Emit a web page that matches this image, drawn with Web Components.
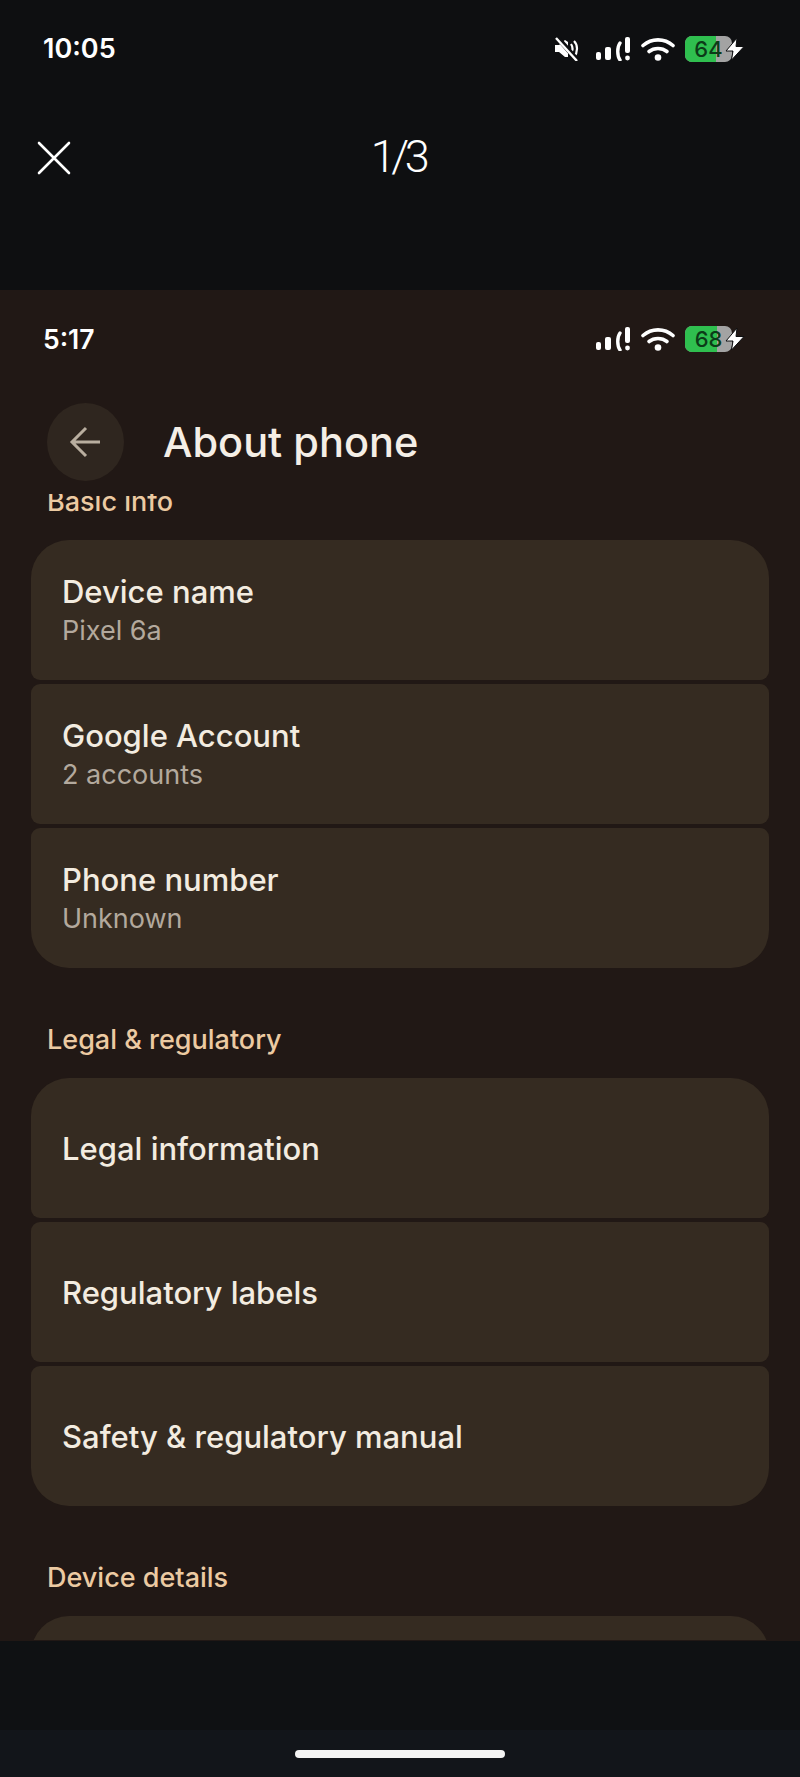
<!DOCTYPE html>
<html>
<head>
<meta charset="utf-8">
<title>About phone</title>
<style>
    html, body { margin: 0; padding: 0; background: #0e0f11; }
    body { width: 800px; height: 1777px; overflow: hidden; font-family: "Inter", "Liberation Sans", sans-serif; }
</style>
</head>
<body>
<viewer-app></viewer-app>

<script>
class StatusIcons extends HTMLElement {
    connectedCallback () {
        this.attachShadow({mode: "open"});
        let mute = "";

        if(this.hasAttribute("muted"))
            mute = `
            <svg class="mute" width="26" height="24" viewBox="0 0 26 24">
                <path fill="#fff" d="M1 8h4l6-5 3 2v15l-3 0-6-5H1z"/>
                <path fill="none" stroke="#fff" stroke-width="2.2" d="M17 7c2 3 2 6 0 9M20 4c4 4 4 11 0 16"/>
                <path stroke="#0e0f11" stroke-width="5" d="M3 0l21 24"/>
                <path stroke="#fff" stroke-width="2.4" d="M2 1l21 23"/>
            </svg>`;

        this.shadowRoot.innerHTML = `
        <style>
            :host { display: flex; align-items: center; height: 26px; }
            svg { display: block; flex: none; }
            .mute { margin-right: 16px; }
            .signal { margin-right: 10px; }
            .wifi { margin-right: 10px; }
            .battery { position: relative; width: 47px; height: 26px; border-radius: 7px; background: #a3a3a3; font: 500 22px/26px "Inter", "Liberation Sans", sans-serif; color: #0c3b18; text-align: center; }
            .battery i { position: absolute; left: 0; top: 0; bottom: 0; width: var(--level); background: #2fbf4f; border-radius: 7px 0 0 7px; }
            .battery span { position: relative; }
        </style>
        ${mute}
        <svg class="signal" width="35" height="24" viewBox="0 0 35 24">
            <rect x="0" y="15" width="5" height="8" rx="2" fill="#fff"/>
            <rect x="9" y="10" width="6" height="13" rx="2" fill="#fff"/>
            <path d="M24 6c-3 4-3 13 0 17" fill="none" stroke="#fff" stroke-width="3.4" stroke-linecap="round"/>
            <rect x="29" y="0" width="5" height="16" rx="2" fill="#fff"/>
            <circle cx="31.5" cy="21" r="2.4" fill="#fff"/>
        </svg>
        <svg class="wifi" width="34" height="24" viewBox="0 0 34 24">
            <g fill="none" stroke="#fff" stroke-width="3.6" stroke-linecap="round">
                <path d="M2 8.5C10.500 1 23.500 1 32 8.500"/>
                <path d="M8 14.500c5-4 13-4 18 0"/>
            </g>
            <circle cx="17" cy="20.500" r="3.300" fill="#fff"/>
        </svg>
        <div class="battery" style="--level: ${this.getAttribute("fill")}"><i></i><span>${this.getAttribute("level")}</span></div>
        <svg class="bolt" width="20" height="24" viewBox="0 0 20 24" style="margin-left: -7px; position: relative">
            <path fill="#fff" stroke="#0e0f11" stroke-width="1" d="M12 1L1 14h7L6.500 23 19 9.500h-8z"/>
        </svg>
        `;
    }
}

class StatusBar extends HTMLElement {
    connectedCallback () {
        this.attachShadow({mode: "open"});
        let time = this.getAttribute("time");
        let level = this.getAttribute("level");
        let fill = this.getAttribute("fill");
        let muted = this.hasAttribute("muted") ? "muted" : "";
        this.shadowRoot.innerHTML = `
        <style>
            :host { display: flex; justify-content: space-between; align-items: center; padding: 0 55px 0 43px; height: 26px; color: #fff; }
            .time { font: 600 var(--time-size, 27px)/26px "Inter", "Liberation Sans", sans-serif; }
        </style>
        <span class="time">${time}</span>
        <status-icons level="${level}" fill="${fill}" ${muted}></status-icons>
        `;
    }
}

class ViewerHeader extends HTMLElement {
    connectedCallback () {
        this.attachShadow({mode: "open"});
        this.shadowRoot.innerHTML = `
        <style>
            :host { display: grid; grid-template-columns: 1fr auto 1fr; align-items: center; height: 40px; padding: 0 37px; color: #fff; }
            svg { display: block; }
            .count { font: 300 45px/36px "Roboto", "Liberation Sans", sans-serif; letter-spacing: -4.500px; padding-right: 4px; margin-top: -3px; }
        </style>
        <svg width="34" height="34" viewBox="0 0 34 34"><path d="M2 2l30 30M32 2L2 32" stroke="#fff" stroke-width="2.600" stroke-linecap="round"/></svg>
        <span class="count"><slot></slot></span>
        <span></span>
        `;
    }
}

class SectionLabel extends HTMLElement {
    connectedCallback () {
        this.attachShadow({mode: "open"});
        this.shadowRoot.innerHTML = `
        <style>
            :host { display: block; padding: 2px 0 0 47px; font: 500 27px/32px "Inter", "Liberation Sans", sans-serif; color: #eccaa2; }
        </style>
        <slot></slot>
        `;
    }
}

class PrefGroup extends HTMLElement {
    connectedCallback () {
        this.attachShadow({mode: "open"});
        this.shadowRoot.innerHTML = `
        <style>
            :host { display: flex; flex-direction: column; gap: 4px; margin: 0 31px 0 31px; border-radius: 38px; overflow: hidden; }
        </style>
        <slot></slot>
        `;
    }
}

class PrefItem extends HTMLElement {
    connectedCallback () {
        this.attachShadow({mode: "open"});
        let summary = this.getAttribute("summary");
        let sub = "";

        if(summary)
            sub = `<div class="summary">${summary}</div>`;

        this.shadowRoot.innerHTML = `
        <style>
            :host { display: flex; flex-direction: column; justify-content: center; height: 140px; box-sizing: border-box; padding: 2px 32px 0 31px; background: #352b21; border-radius: 9px; }
            .title { font: 500 31px/38px "Inter", "Liberation Sans", sans-serif; color: #f3ece0; }
            .summary { font: 400 27px/38px "Inter", "Liberation Sans", sans-serif; color: #b3a99d; margin-top: 1px; }
        </style>
        <div class="title">${this.getAttribute("title")}</div>
        ${sub}
        `;
    }
}

class SettingsAppBar extends HTMLElement {
    connectedCallback () {
        this.attachShadow({mode: "open"});
        this.shadowRoot.innerHTML = `
        <style>
            :host { display: flex; align-items: center; gap: 39px; height: 78px; padding-left: 47px; color: #f4eee6; }
            .back { width: 77px; height: 78px; border-radius: 50%; background: #2f261f; display: flex; align-items: center; justify-content: center; }
            .title { font: 500 41.500px/78px "Inter", "Liberation Sans", sans-serif; }
        </style>
        <div class="back">
            <svg width="34" height="32" viewBox="0 0 34 32"><path d="M31 16H4M17 2L3 16l14 14" fill="none" stroke="#b9ae9f" stroke-width="3"/></svg>
        </div>
        <div class="title"><slot></slot></div>
        `;
    }
}

class SettingsScreen extends HTMLElement {
    connectedCallback () {
        this.attachShadow({mode: "open"});
        this.shadowRoot.innerHTML = `
        <style>
            :host { display: block; height: 1351px; background: #211815; overflow: hidden; }
            status-bar { margin-top: 36px; --time-size: 26.500px; }
            settings-app-bar { margin-top: 51px; }
            .scroll { margin-top: 13px; height: 1146px; overflow: hidden; }
            .content { margin-top: -10px; }
            section-label { margin-bottom: 22px; }
            pref-group { margin-bottom: 54px; }
        </style>
        <status-bar time="5:17" level="68" fill="68%"></status-bar>
        <settings-app-bar>About phone</settings-app-bar>
        <div class="scroll">
            <div class="content">
                <section-label>Basic info</section-label>
                <pref-group>
                    <pref-item title="Device name" summary="Pixel 6a"></pref-item>
                    <pref-item title="Google Account" summary="2 accounts"></pref-item>
                    <pref-item title="Phone number" summary="Unknown"></pref-item>
                </pref-group>
                <section-label>Legal &amp; regulatory</section-label>
                <pref-group>
                    <pref-item title="Legal information"></pref-item>
                    <pref-item title="Regulatory labels"></pref-item>
                    <pref-item title="Safety &amp; regulatory manual"></pref-item>
                </pref-group>
                <section-label>Device details</section-label>
                <pref-group>
                    <pref-item title=""></pref-item>
                </pref-group>
            </div>
        </div>
        `;
    }
}

class ViewerApp extends HTMLElement {
    connectedCallback () {
        this.attachShadow({mode: "open"});
        this.shadowRoot.innerHTML = `
        <style>
            :host { display: flex; flex-direction: column; height: 1777px; background: #0e0f11; }
            .top { height: 290px; box-sizing: border-box; padding-top: 36px; }
            viewer-header { margin-top: 76px; }
            .gap { height: 89px; background: #0f1113; }
            .nav { flex: 1; background: #12151a; display: flex; justify-content: center; padding-top: 20px; }
            .home { width: 210px; height: 8px; border-radius: 4px; background: #f4f4f4; }
        </style>
        <div class="top">
            <status-bar time="10:05" level="64" fill="66%" muted></status-bar>
            <viewer-header>1/3</viewer-header>
        </div>
        <settings-screen></settings-screen>
        <div class="gap"></div>
        <div class="nav"><div class="home"></div></div>
        `;
    }
}

customElements.define("status-icons", StatusIcons);
customElements.define("status-bar", StatusBar);
customElements.define("viewer-header", ViewerHeader);
customElements.define("section-label", SectionLabel);
customElements.define("pref-group", PrefGroup);
customElements.define("pref-item", PrefItem);
customElements.define("settings-app-bar", SettingsAppBar);
customElements.define("settings-screen", SettingsScreen);
customElements.define("viewer-app", ViewerApp);
</script>
</body>
</html>
